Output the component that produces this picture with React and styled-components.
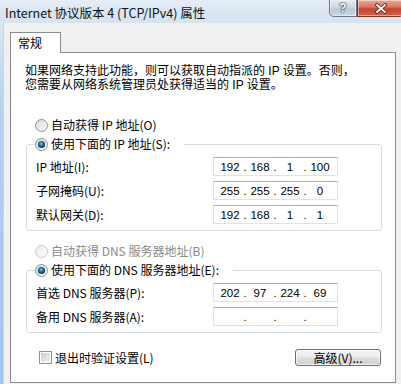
import React from "react"
import styled, { createGlobalStyle } from "styled-components"

const GlobalStyle = createGlobalStyle`
  html, body {
    margin: 0;
    padding: 0;
    background: #f0f0f0;
  }
  body {
    font-family: "Noto Sans CJK SC", "Liberation Sans", sans-serif;
    font-size: 12px;
    color: #000;
  }
  * {
    box-sizing: border-box;
  }
`

const Window = styled.div`
  width: 401px;
  height: 384px;
  overflow: hidden;
  display: flex;
  flex-direction: column;
  background: #f0f0f0;
`

const TitleBar = styled.div`
  height: 23px;
  flex: none;
  display: flex;
  align-items: flex-start;
  background: linear-gradient(180deg, #e6edf6 0%, #dae5f2 55%, #d8e3f0 100%);
`

const Title = styled.div`
  flex: 1;
  padding-left: 5px;
  line-height: 26px;
  font-size: 12.5px;
  white-space: nowrap;
  color: #111;
`

const CaptionButton = styled.div`
  flex: none;
  width: ${(p) => p.$w}px;
  height: 17px;
  display: flex;
  align-items: center;
  justify-content: center;
  border: 1px solid ${(p) => (p.$close ? "#8a3126" : "#6c7888")};
  border-top: none;
  border-radius: ${(p) => (p.$close ? "0 0 5px 0" : "0 0 0 5px")};
  margin-right: ${(p) => (p.$close ? "-3px" : "0")};
  background: ${(p) =>
    p.$close
      ? "linear-gradient(180deg, #e9ab9c 0%, #d9735f 45%, #c4432d 55%, #d2644c 100%)"
      : "linear-gradient(180deg, #e3e9f1 0%, #cfd9e5 45%, #bac7d7 55%, #cad6e4 100%)"};
  box-shadow: inset 0 0 0 1px rgba(255, 255, 255, 0.45);
`

const HelpGlyph = styled.span`
  font-family: "Liberation Sans", sans-serif;
  font-weight: bold;
  font-size: 12px;
  line-height: 12px;
  color: #fff;
  text-shadow: 0 0 1px #2d3846, 0 0 1px #2d3846, 0 0 2px #2d3846;
`

const Frame = styled.div`
  flex: 1;
  min-height: 0;
  display: flex;
`

const FrameEdge = styled.div`
  flex: none;
  width: 4px;
  background: linear-gradient(180deg, #dbe5f1 0%, #b3d0ee 25%, #a2c6ec 100%);
  border-right: 1px solid #c7d5e4;
`

const Content = styled.div`
  flex: 1;
  display: flex;
  flex-direction: column;
  padding: 9px 5px 1px 6px;
`

const TabStrip = styled.div`
  display: flex;
  height: 20px;
  flex: none;
`

const Tab = styled.div`
  position: relative;
  z-index: 1;
  width: 51px;
  height: 21px;
  padding-left: 7px;
  line-height: 20px;
  background: #fff;
  border: 1px solid #898c95;
  border-bottom: none;
`

const Panel = styled.div`
  flex: 1;
  display: flex;
  flex-direction: column;
  background: #fff;
  border: 1px solid #898c95;
  padding: 11px 13px 0 14px;
`

const Description = styled.p`
  margin: 0;
  font-family: "Liberation Sans", "Noto Sans CJK SC", sans-serif;
  line-height: 14px;
  white-space: nowrap;
`

const Option = styled.div`
  display: flex;
  align-items: center;
  gap: 3px;
  height: 14px;
  line-height: 14px;
  padding-left: ${(p) => (p.$inLegend ? 0 : 10)}px;
  margin-top: ${(p) => p.$mt || 0}px;
  color: ${(p) => (p.$disabled ? "#8a8a8a" : "#000")};
  white-space: nowrap;
`

const GroupBox = styled.fieldset`
  margin: ${(p) => p.$mt || 0}px 0 0 1px;
  min-width: 0;
  border: 1px solid #d5dfe5;
  border-radius: 3px;
  padding: 6px 43px 6px 9px;
  display: flex;
  flex-direction: column;
  gap: 5px;
`

const Legend = styled.legend`
  margin-left: -1px;
  padding: 0 14px 0 0;
`

const FieldRow = styled.div`
  display: flex;
  align-items: center;
  height: 19px;
`

const FieldLabel = styled.div`
  flex: 1;
  white-space: nowrap;
`

const IpBox = styled.div`
  flex: none;
  width: 125px;
  height: 19px;
  display: flex;
  align-items: center;
  padding-left: 4px;
  background: #fff;
  border: 1px solid #dde2e8;
  border-top-color: #abadb3;
  font-family: "Liberation Sans", sans-serif;
  font-size: 11.5px;
  color: #000;
`

const Octet = styled.span`
  width: 24px;
  text-align: center;
`

const Dot = styled.span`
  width: 6px;
  text-align: center;
`

const Footer = styled.div`
  display: flex;
  align-items: center;
  justify-content: space-between;
  margin-top: 16px;
  padding-left: 14px;
  padding-right: 1px;
`

const Check = styled.div`
  display: flex;
  align-items: center;
  gap: 3px;
  line-height: 14px;
`

const Button = styled.div`
  width: 86px;
  height: 17px;
  line-height: 15px;
  text-align: center;
  border: 1px solid #707070;
  border-radius: 3px;
  background: linear-gradient(180deg, #f3f3f3 0%, #ebebeb 48%, #dddddd 52%, #d0d0d0 100%);
  box-shadow: inset 0 0 0 1px rgba(255, 255, 255, 0.7);
`

function RadioMark({ checked, disabled }) {
  const face = disabled ? "rbFaceDis" : "rbFace"
  return (
    <svg width="13" height="13" viewBox="0 0 13 13">
      <defs>
        <linearGradient id="rbFace" x1="0" y1="0" x2="1" y2="1">
          <stop offset="0" stopColor="#d6d9dc" />
          <stop offset="1" stopColor="#fbfbfb" />
        </linearGradient>
        <linearGradient id="rbFaceDis" x1="0" y1="0" x2="1" y2="1">
          <stop offset="0" stopColor="#eeeeee" />
          <stop offset="1" stopColor="#fafafa" />
        </linearGradient>
        <radialGradient id="rbDot" cx="0.45" cy="0.4" r="0.6">
          <stop offset="0" stopColor="#7fd3ef" />
          <stop offset="0.45" stopColor="#1f7796" />
          <stop offset="1" stopColor="#0b3344" />
        </radialGradient>
      </defs>
      <circle
        cx="6.5"
        cy="6.5"
        r="6"
        fill={`url(#${face})`}
        stroke={disabled ? "#c9c9c9" : "#8e9399"}
      />
      {checked && <circle cx="6.5" cy="6.5" r="3.6" fill="url(#rbDot)" />}
    </svg>
  )
}

function CheckMark() {
  return (
    <svg width="13" height="13" viewBox="0 0 13 13">
      <defs>
        <linearGradient id="cbFace" x1="0" y1="0" x2="1" y2="1">
          <stop offset="0" stopColor="#c9cdd2" />
          <stop offset="1" stopColor="#f4f4f4" />
        </linearGradient>
      </defs>
      <rect x="0.5" y="0.5" width="12" height="12" fill="#fff" stroke="#8e9399" />
      <rect x="2" y="2" width="9" height="9" fill="url(#cbFace)" />
    </svg>
  )
}

function CloseGlyph() {
  return (
    <svg width="14" height="11" viewBox="0 0 14 11">
      <path d="M3 2 L11 9 M11 2 L3 9" stroke="#5a1c14" strokeWidth="3.6" strokeLinecap="round" />
      <path d="M3 2 L11 9 M11 2 L3 9" stroke="#fff" strokeWidth="2" strokeLinecap="round" />
    </svg>
  )
}

function IpField({ parts }) {
  const octets = parts || ["", "", "", ""]
  return (
    <IpBox>
      {octets.map((o, i) => (
        <React.Fragment key={i}>
          {i > 0 && <Dot>.</Dot>}
          <Octet>{o}</Octet>
        </React.Fragment>
      ))}
    </IpBox>
  )
}

const ipRows = [
  { label: "IP 地址(I):", value: ["192", "168", "1", "100"] },
  { label: "子网掩码(U):", value: ["255", "255", "255", "0"] },
  { label: "默认网关(D):", value: ["192", "168", "1", "1"] },
]

const dnsRows = [
  { label: "首选 DNS 服务器(P):", value: ["202", "97", "224", "69"] },
  { label: "备用 DNS 服务器(A):", value: null },
]

export default function App() {
  return (
    <>
      <GlobalStyle />
      <Window>
        <TitleBar>
          <Title>Internet 协议版本 4 (TCP/IPv4) 属性</Title>
          <CaptionButton $w={28}>
            <HelpGlyph>?</HelpGlyph>
          </CaptionButton>
          <CaptionButton $w={47} $close>
            <CloseGlyph />
          </CaptionButton>
        </TitleBar>
        <Frame>
          <FrameEdge />
          <Content>
            <TabStrip>
              <Tab>常规</Tab>
            </TabStrip>
            <Panel>
              <Description>
                如果网络支持此功能，则可以获取自动指派的 IP 设置。否则，
                <br />
                您需要从网络系统管理员处获得适当的 IP 设置。
              </Description>

              <Option $mt={26}>
                <RadioMark />
                自动获得 IP 地址(O)
              </Option>
              <GroupBox $mt={5}>
                <Legend>
                  <Option $inLegend>
                    <RadioMark checked />
                    使用下面的 IP 地址(S):
                  </Option>
                </Legend>
                {ipRows.map((r) => (
                  <FieldRow key={r.label}>
                    <FieldLabel>{r.label}</FieldLabel>
                    <IpField parts={r.value} />
                  </FieldRow>
                ))}
              </GroupBox>

              <Option $mt={13} $disabled>
                <RadioMark disabled />
                自动获得 DNS 服务器地址(B)
              </Option>
              <GroupBox $mt={5}>
                <Legend>
                  <Option $inLegend>
                    <RadioMark checked />
                    使用下面的 DNS 服务器地址(E):
                  </Option>
                </Legend>
                {dnsRows.map((r) => (
                  <FieldRow key={r.label}>
                    <FieldLabel>{r.label}</FieldLabel>
                    <IpField parts={r.value} />
                  </FieldRow>
                ))}
              </GroupBox>

              <Footer>
                <Check>
                  <CheckMark />
                  退出时验证设置(L)
                </Check>
                <Button>高级(V)...</Button>
              </Footer>
            </Panel>
          </Content>
        </Frame>
      </Window>
    </>
  )
}
